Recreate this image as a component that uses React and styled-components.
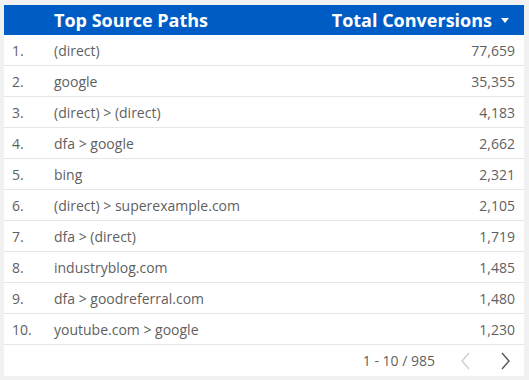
import React from "react";
import styled, { createGlobalStyle } from "styled-components";

const GlobalStyle = createGlobalStyle`
  html, body {
    margin: 0;
    padding: 0;
    background: #f1f1f1;
    font-family: "Open Sans", "Liberation Sans", sans-serif;
  }
`;

const Page = styled.div`
  width: 529px;
  height: 380px;
  padding: 5px 5px 5px 4px;
  box-sizing: border-box;
`;

const Card = styled.div`
  background: #ffffff;
  width: 520px;
  display: flex;
  flex-direction: column;
`;

const Header = styled.div`
  height: 30px;
  background: #005cc5;
  color: #ffffff;
  display: grid;
  grid-template-columns: 50px 1fr auto;
  align-items: center;
  font-size: 18px;
  font-weight: 700;
  padding-right: 15px;
`;

const HeaderCell = styled.div`
  display: flex;
  align-items: center;
  gap: 9px;
  white-space: nowrap;
`;

const SortArrow = styled.span`
  width: 0;
  height: 0;
  border-left: 4px solid transparent;
  border-right: 4px solid transparent;
  border-top: 5px solid #ffffff;
  margin-top: 1px;
`;

const Row = styled.div`
  height: 31px;
  box-sizing: border-box;
  border-bottom: 1px solid #e6e6e6;
  display: grid;
  grid-template-columns: 42px 1fr auto;
  align-items: center;
  font-size: 14px;
  color: #5f5f5f;
  padding: 0 9px 0 8px;
`;

const Index = styled.div``;
const Path = styled.div``;
const Value = styled.div`
  text-align: right;
`;

const Footer = styled.div`
  height: 31px;
  display: flex;
  align-items: center;
  justify-content: flex-end;
  font-size: 14px;
  color: #5f5f5f;
  padding-right: 14px;
`;

const Range = styled.span`
  margin-right: 26px;
`;

const PageButton = styled.button`
  border: none;
  background: none;
  padding: 0;
  margin-left: ${(p) => (p.$next ? "31px" : "0")};
  display: flex;
  align-items: center;
  cursor: pointer;
`;

const Chevron = ({ dir, color }) => (
  <svg width="9" height="18" viewBox="0 0 9 18">
    <path
      d={dir === "left" ? "M8 1 L1 9 L8 17" : "M1 1 L8 9 L1 17"}
      fill="none"
      stroke={color}
      strokeWidth="1.4"
    />
  </svg>
);

const rows = [
  ["(direct)", "77,659"],
  ["google", "35,355"],
  ["(direct) > (direct)", "4,183"],
  ["dfa > google", "2,662"],
  ["bing", "2,321"],
  ["(direct) > superexample.com", "2,105"],
  ["dfa > (direct)", "1,719"],
  ["industryblog.com", "1,485"],
  ["dfa > goodreferral.com", "1,480"],
  ["youtube.com > google", "1,230"],
];

export default function App() {
  return (
    <Page>
      <GlobalStyle />
      <Card>
        <Header>
          <span />
          <HeaderCell>Top Source Paths</HeaderCell>
          <HeaderCell>
            Total Conversions <SortArrow />
          </HeaderCell>
        </Header>
        {rows.map((r, i) => (
          <Row key={i}>
            <Index>{i + 1}.</Index>
            <Path>{r[0]}</Path>
            <Value>{r[1]}</Value>
          </Row>
        ))}
        <Footer>
          <Range>1 - 10 / 985</Range>
          <PageButton>
            <Chevron dir="left" color="#cfcfcf" />
          </PageButton>
          <PageButton $next>
            <Chevron dir="right" color="#555555" />
          </PageButton>
        </Footer>
      </Card>
    </Page>
  );
}
